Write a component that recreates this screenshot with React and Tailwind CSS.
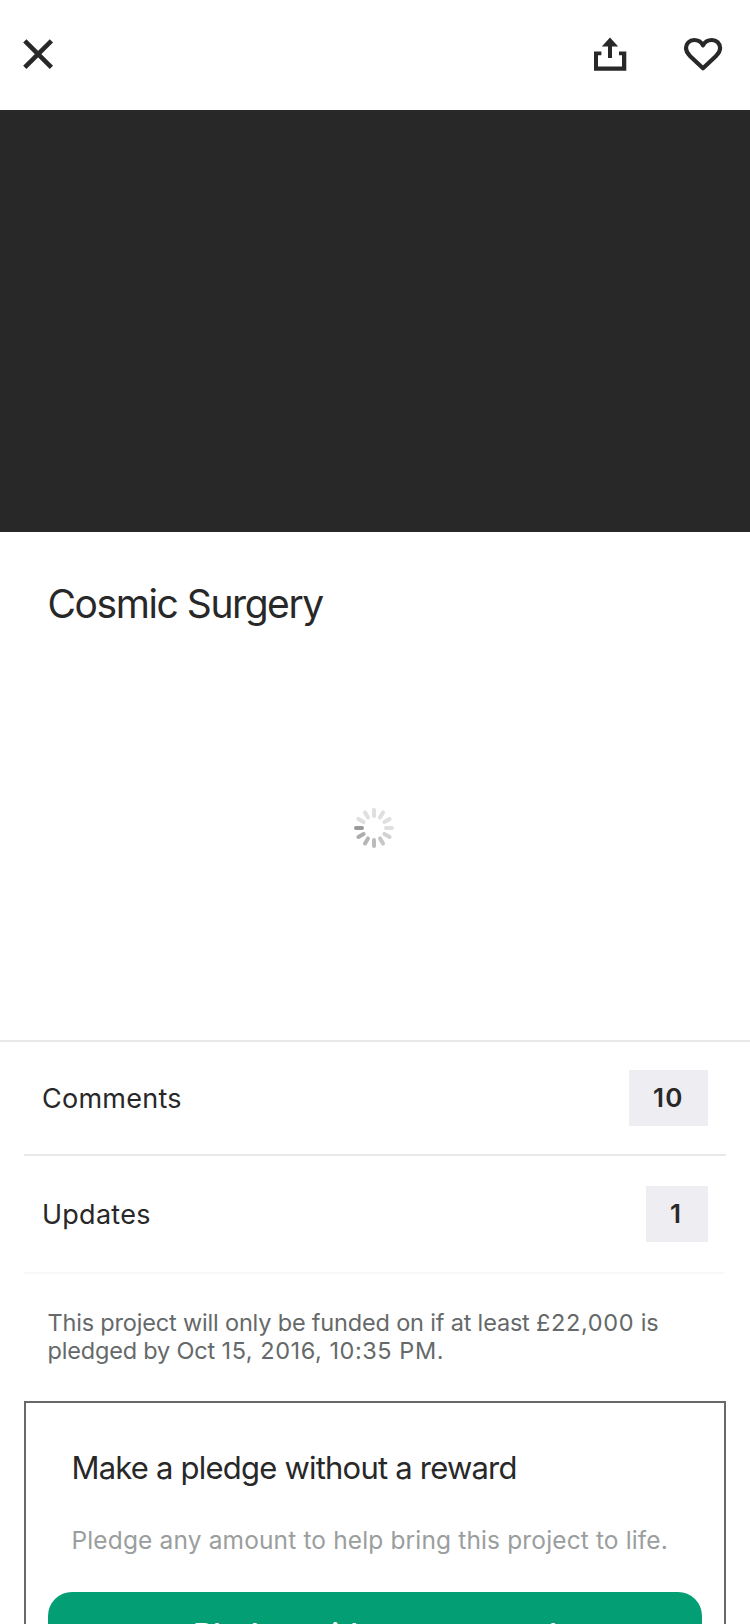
const SPOKES = [
  "#dfdfdf", "#dfdfdf", "#dfdfdf", "#dfdfdf", "#d2d2d2", "#c6c6c6",
  "#bcbcbc", "#b6b6b6", "#adadad", "#9a9a9a", "#dfdfdf", "#dfdfdf",
];

function CloseIcon() {
  return (
    <svg className="h-8 w-8" viewBox="0 0 32 32" fill="none" stroke="#282828" strokeWidth="4.6">
      <path d="M2.8 2.8 29.4 29.4M29.4 2.8 2.8 29.4" />
    </svg>
  );
}

function ShareIcon() {
  return (
    <svg className="h-9 w-9" viewBox="0 0 36 36" fill="#282828">
      <path d="M18 1.4 26.2 10.6H20V22h-4V10.6H9.8Z" />
      <path d="M2 15.4H9.4V19.3H6V30.6H30V19.3H27V15.4H34.3V34.7H2Z" />
    </svg>
  );
}

function HeartIcon() {
  return (
    <svg className="h-9 w-10" viewBox="0 0 40 36" fill="none" stroke="#282828" strokeWidth="4.2" strokeLinejoin="round">
      <path d="M20 32.3 7.2 20.2C4.4 17.5 3 14.9 3 12.1 3 7.6 6.5 4 11.1 4c3.7 0 6.9 1.6 8.9 5.3C22 5.6 25.2 4 28.9 4c4.6 0 8.2 3.6 8.2 8.1 0 2.8-1.5 5.4-4.3 8.1Z" />
    </svg>
  );
}

function Spinner() {
  return (
    <svg className="h-10 w-10" viewBox="-20 -20 40 40" strokeWidth="4" strokeLinecap="round">
      {SPOKES.map((color, i) => (
        <line key={i} x1="0" y1="-12" x2="0" y2="-18" stroke={color} transform={`rotate(${i * 30})`} />
      ))}
    </svg>
  );
}

function CountRow({ label, count, className, badgeClassName }) {
  return (
    <div className={`flex items-center justify-between px-[42px] ${className}`}>
      <span className="pt-0.5 text-[27px] tracking-[0.25px]">{label}</span>
      <span className={`flex h-14 items-center bg-[#eeedf2] pb-0.5 pl-6 text-[26px] font-semibold tracking-[1.2px] ${badgeClassName}`}>
        {count}
      </span>
    </div>
  );
}

export default function App() {
  return (
    <div className="flex h-[1624px] w-[750px] flex-col overflow-hidden bg-white font-['Inter',sans-serif] text-[#282828]">
      <header className="flex h-[110px] shrink-0 items-start pt-9 pr-[27px] pl-[22px]">
        <button className="mt-0.5" aria-label="Close"><CloseIcon /></button>
        <button className="ml-auto" aria-label="Share"><ShareIcon /></button>
        <button className="ml-[55px]" aria-label="Save"><HeartIcon /></button>
      </header>
      <div className="h-[422px] shrink-0 bg-[#282828]" />
      <section className="flex h-[508px] shrink-0 flex-col pt-12">
        <h1 className="pl-[47.5px] text-[39px] leading-[48px] tracking-[-1.43px]">Cosmic Surgery</h1>
        <div className="mt-[180px] pl-[354px]"><Spinner /></div>
      </section>
      <div className="h-0.5 shrink-0 bg-[#e8e8e8]" />
      <CountRow label="Comments" count="10" className="h-28 shrink-0" badgeClassName="w-[79px]" />
      <div className="mx-6 h-0.5 shrink-0 bg-[#e8e8e8]" />
      <CountRow label="Updates" count="1" className="h-[116px] shrink-0" badgeClassName="w-[62px]" />
      <div className="mr-[26px] ml-6 h-0.5 shrink-0 bg-[#f7f7f7]" />
      <p className="mt-[35px] pl-[47.5px] text-[23.5px] leading-7 tracking-[-0.18px] whitespace-nowrap text-[#656969]">
        This project will only be funded on if at least <span className="tracking-[0.65px]">£22,000</span> is
        <br />
        pledged by Oct <span className="tracking-[0.55px]">15, 2016, 10:35 PM.</span>
      </p>
      <section className="mx-6 mt-9 flex h-[300px] shrink-0 flex-col border-2 border-[#696969] px-[22px] pt-[45px]">
        <h2 className="pl-[23.5px] text-[31px] leading-10 tracking-[-0.79px]">Make a pledge without a reward</h2>
        <p className="mt-8 pl-[23.5px] text-[24.5px] leading-10 tracking-[0.14px] whitespace-nowrap text-[#9b9e9e]">
          Pledge any amount to help bring this project to life.
        </p>
        <button className="mt-8 flex h-[86px] shrink-0 items-center justify-center rounded-[24px] bg-[#039e74] text-[31px] leading-[48px] font-medium tracking-[0.25px] text-white">
          Pledge without a reward
        </button>
      </section>
    </div>
  );
}
